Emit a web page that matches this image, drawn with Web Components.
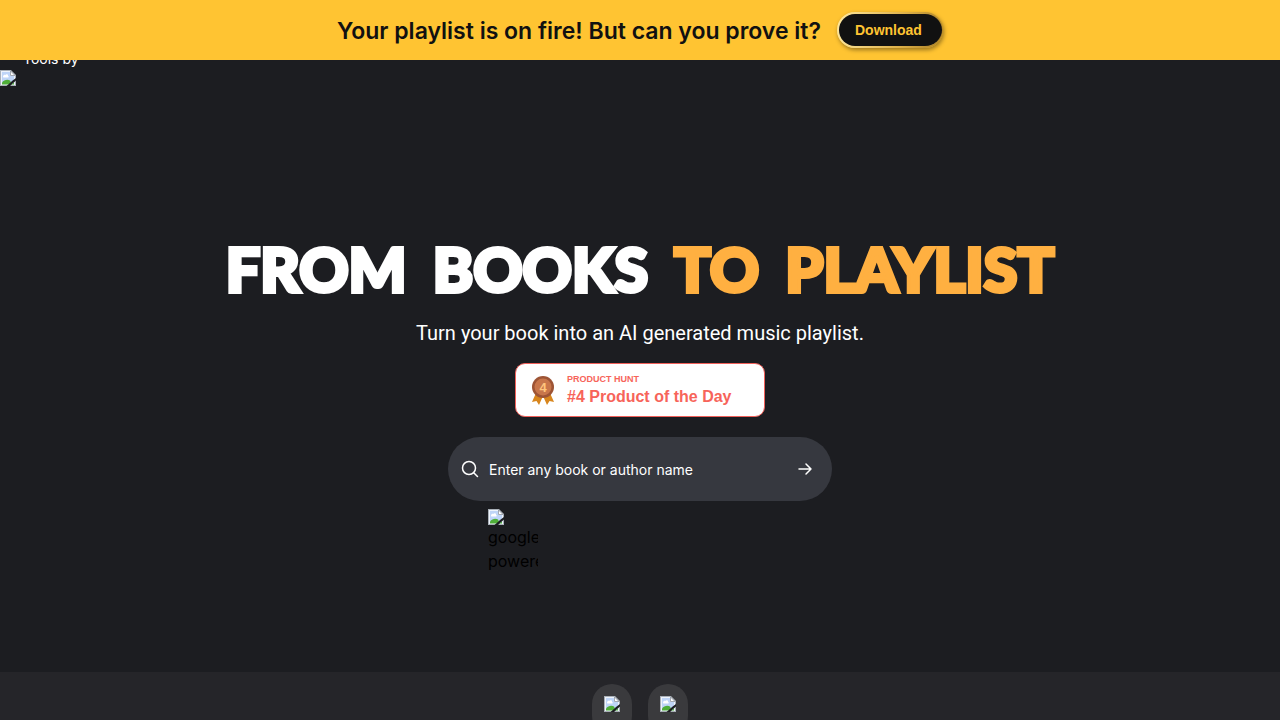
<!DOCTYPE html>
<html lang="en">
<head>
  <meta charset="utf-8">
  <meta name="viewport" content="width=device-width, initial-scale=1">
  <title>From Books to Playlist</title>
  <style>
    body{
      background-color: #1c1d21;
      color: #ffffff;
      font-family: Inter, 'Liberation Sans', sans-serif;
      font-size: 16px;
      line-height: 24px;
      margin: 0;
    }
  </style>
</head>
<body>
  <page-component>
    <promo-banner slot="banner" href="#download" action="Download">Your playlist is on fire! But can you prove it?</promo-banner>
    <tools-header slot="header">Tools by</tools-header>
    <hero-component>
      <title-component slot="title"></title-component>
      <span slot="subtitle">Turn your book into an AI generated music playlist.</span>
      <product-badge slot="badge" rank="4"></product-badge>
      <search-component slot="search"></search-component>
      <powered-component slot="powered">google powered</powered-component>
    </hero-component>
    <footer-component slot="footer"></footer-component>
  </page-component>

  <script>
    class Page extends HTMLElement {
      constructor () {
        super()
        this.shadow = this.attachShadow({ mode: 'open' })
      }

      connectedCallback () {
        this.render()
      }

      render () {
        this.shadow.innerHTML =
        /* html */`
          <style>
            :host{
              display: block;
            }

            .screen{
              display: flex;
              flex-direction: column;
              min-height: calc(100vh - 48px);
            }

            main{
              display: flex;
              flex: 1;
              flex-direction: column;
            }
          </style>

          <slot name="banner"></slot>
          <div class="screen">
            <slot name="header"></slot>
            <main><slot></slot></main>
          </div>
          <slot name="footer"></slot>
        `
      }
    }

    customElements.define('page-component', Page)

    class PromoBanner extends HTMLElement {
      constructor () {
        super()
        this.shadow = this.attachShadow({ mode: 'open' })
      }

      connectedCallback () {
        this.render()
      }

      render () {
        this.shadow.innerHTML =
        /* html */`
          <style>
            :host{
              align-items: center;
              background-color: #ffc432;
              box-sizing: border-box;
              color: #111111;
              display: flex;
              gap: 16px;
              height: 60px;
              justify-content: center;
              left: 0;
              position: fixed;
              right: 0;
              top: 0;
              z-index: 10;
            }

            p{
              font-size: 23px;
              font-weight: 600;
              line-height: 32px;
              margin: 0;
              padding-top: 2px;
            }

            a{
              background: linear-gradient(#111111, #111111) padding-box, linear-gradient(100deg, #ffe9a0, #e0b24a 60%, #a87f25) border-box;
              border: 2px solid transparent;
              border-radius: 20px;
              border-right-width: 1px;
              box-shadow: 1px 2px 4px rgba(0, 0, 0, 0.4);
              color: #ffc432;
              font-family: 'Liberation Sans', sans-serif;
              font-size: 14px;
              font-weight: 700;
              line-height: 20px;
              padding: 6px 20px 6px 16px;
              text-decoration: none;
            }
          </style>

          <p><slot></slot></p>
          <a href="${this.getAttribute('href')}">${this.getAttribute('action')}</a>
        `
      }
    }

    customElements.define('promo-banner', PromoBanner)

    class MissingImage extends HTMLElement {
      constructor () {
        super()
        this.shadow = this.attachShadow({ mode: 'open' })
      }

      connectedCallback () {
        this.render()
      }

      render () {
        this.shadow.innerHTML =
        /* html */`
          <style>
            :host{
              display: block;
              height: 16px;
              width: 16px;
            }

            svg{
              display: block;
            }
          </style>

          <svg width="16" height="16" viewBox="0 0 16 16" aria-hidden="true">
            <path d="M0 0H11L16 5V16H0Z" fill="#a9b0b8"/>
            <path d="M1 1H10.5L15 5.500V15H1Z" fill="#eef3fb"/>
            <path d="M2 2H10V6H14V14H2Z" fill="#bfd5f7"/>
            <path d="M3 6.500C3 5 5 4.500 5.500 5C6 3.500 8.500 4 8 6C9 6 9 7.500 8 7.500H4C3 7.500 3 7 3 6.500Z" fill="#ffffff"/>
            <path d="M2 14.500V12.500C4 9.500 8 9 10 10.500L12 14.500Z" fill="#4fae38"/>
            <path d="M10.500 1V5.500H15Z" fill="#ffffff" stroke="#8f969e" stroke-width="0.800"/>
            <path d="M16 8V10.500L10 16H6.500L10.500 12.500L12 11Z" fill="#1c1d21"/>
            <path d="M14 12.500V14.500H11.500Z" fill="#4fae38"/>
          </svg>
        `
      }
    }

    customElements.define('missing-image', MissingImage)

    class ToolsHeader extends HTMLElement {
      constructor () {
        super()
        this.shadow = this.attachShadow({ mode: 'open' })
      }

      connectedCallback () {
        this.render()
      }

      render () {
        this.shadow.innerHTML =
        /* html */`
          <style>
            :host{
              display: block;
              padding-top: 48px;
            }

            p{
              font-size: 14px;
              line-height: 22px;
              margin: 0;
              padding-left: 23px;
            }
          </style>

          <header>
            <p><slot></slot></p>
            <missing-image></missing-image>
          </header>
        `
      }
    }

    customElements.define('tools-header', ToolsHeader)

    class Hero extends HTMLElement {
      constructor () {
        super()
        this.shadow = this.attachShadow({ mode: 'open' })
      }

      connectedCallback () {
        this.render()
      }

      render () {
        this.shadow.innerHTML =
        /* html */`
          <style>
            :host{
              align-items: center;
              display: flex;
              flex: 1;
              flex-direction: column;
              justify-content: center;
              padding: 42px 16px 0;
            }

            p{
              font-family: Roboto, sans-serif;
              font-size: 20px;
              line-height: 28px;
              margin: 8px 0 16px;
              text-align: center;
            }

            .search{
              box-sizing: border-box;
              margin-top: 20px;
              max-width: 384px;
              width: 100%;
            }
          </style>

          <slot name="title"></slot>
          <p><slot name="subtitle"></slot></p>
          <slot name="badge"></slot>
          <div class="search">
            <slot name="search"></slot>
            <slot name="powered"></slot>
          </div>
        `
      }
    }

    customElements.define('hero-component', Hero)

    class Title extends HTMLElement {
      constructor () {
        super()
        this.shadow = this.attachShadow({ mode: 'open' })
      }

      connectedCallback () {
        this.render()
      }

      render () {
        this.shadow.innerHTML =
        /* html */`
          <style>
            :host{
              display: block;
            }

            h1{
              -webkit-text-stroke: 4px currentColor;
              column-gap: 26px;
              display: flex;
              flex-wrap: wrap;
              font-family: Lato, Inter, sans-serif;
              font-size: 61px;
              font-weight: 900;
              justify-content: center;
              line-height: 84px;
              margin: 0;
            }

            .highlight{
              color: #ffb041;
            }
          </style>

          <h1>
            <span>FROM</span>
            <span>BOOKS</span>
            <span class="highlight">TO</span>
            <span class="highlight">PLAYLIST</span>
          </h1>
        `
      }
    }

    customElements.define('title-component', Title)

    class ProductBadge extends HTMLElement {
      constructor () {
        super()
        this.shadow = this.attachShadow({ mode: 'open' })
      }

      connectedCallback () {
        this.render()
      }

      render () {
        const rank = this.getAttribute('rank')

        this.shadow.innerHTML =
        /* html */`
          <style>
            :host{
              display: block;
            }

            a{
              align-items: center;
              background-color: #ffffff;
              border: 1px solid #f0605a;
              border-radius: 10px;
              box-sizing: border-box;
              color: #f7645a;
              display: flex;
              font-family: 'Liberation Sans', sans-serif;
              font-weight: 700;
              gap: 13px;
              height: 54px;
              padding: 2px 16px 0;
              text-decoration: none;
              width: 250px;
            }

            small{
              display: block;
              font-size: 9px;
              line-height: 12px;
            }

            strong{
              display: block;
              font-size: 16px;
              line-height: 24px;
            }
          </style>

          <a href="#product-hunt">
            <svg width="22" height="30" viewBox="0 0 22 30" aria-hidden="true">
              <path d="M4 17L0 26L4.500 25L7 29L11 20L15 29L17.500 25L22 26L18 17Z" fill="#d8861d"/>
              <circle cx="11" cy="11" r="11" fill="#9d5435"/>
              <circle cx="11" cy="11" r="8.500" fill="#c8764b"/>
              <text x="11" y="16" fill="#ffc57d" font-size="13" font-weight="700" text-anchor="middle">${rank}</text>
            </svg>
            <span>
              <small>PRODUCT HUNT</small>
              <strong>#${rank} Product of the Day</strong>
            </span>
          </a>
        `
      }
    }

    customElements.define('product-badge', ProductBadge)

    class Search extends HTMLElement {
      constructor () {
        super()
        this.shadow = this.attachShadow({ mode: 'open' })
      }

      connectedCallback () {
        this.render()
      }

      render () {
        this.shadow.innerHTML =
        /* html */`
          <style>
            :host{
              display: block;
            }

            form{
              align-items: center;
              background-color: #36383f;
              border-radius: 32px;
              box-sizing: border-box;
              display: flex;
              height: 64px;
              padding: 0 16px 0 12px;
            }

            label{
              display: flex;
            }

            svg{
              display: block;
              fill: none;
              stroke: #ffffff;
              stroke-linecap: round;
              stroke-linejoin: round;
              stroke-width: 1.5;
            }

            input{
              background-color: transparent;
              border: none;
              color: #ffffff;
              flex: 1;
              font-family: inherit;
              font-size: 14px;
              line-height: 20px;
              min-width: 0;
              outline: none;
              padding: 2px 8px 0 9px;
            }

            input::placeholder{
              color: #ffffff;
              opacity: 1;
            }

            button{
              background-color: transparent;
              border: none;
              cursor: pointer;
              padding: 0;
            }
          </style>

          <form>
            <label for="book" aria-label="Book or author">
              <svg width="20" height="20" viewBox="0 0 20 20" aria-hidden="true">
                <circle cx="9" cy="9" r="6.500"/>
                <path d="M14 14L17.500 17.500"/>
              </svg>
            </label>
            <input id="book" type="text" placeholder="Enter any book or author name">
            <button type="submit" aria-label="Search">
              <svg width="22" height="22" viewBox="0 0 22 22" aria-hidden="true">
                <path d="M5 11H17M12 6L17 11L12 16"/>
              </svg>
            </button>
          </form>
        `

        this.shadow.querySelector('form').addEventListener('submit', event => {
          event.preventDefault()
        })
      }
    }

    customElements.define('search-component', Search)

    class Powered extends HTMLElement {
      constructor () {
        super()
        this.shadow = this.attachShadow({ mode: 'open' })
      }

      connectedCallback () {
        this.render()
      }

      render () {
        this.shadow.innerHTML =
        /* html */`
          <style>
            :host{
              color: #000000;
              display: block;
              margin: 8px 0 0 40px;
              overflow: hidden;
              width: 50px;
            }
          </style>

          <missing-image></missing-image>
          <slot></slot>
        `
      }
    }

    customElements.define('powered-component', Powered)

    class Footer extends HTMLElement {
      constructor () {
        super()
        this.shadow = this.attachShadow({ mode: 'open' })
      }

      connectedCallback () {
        this.render()
      }

      render () {
        this.shadow.innerHTML =
        /* html */`
          <style>
            :host{
              background-color: #252529;
              display: block;
            }

            nav{
              display: flex;
              gap: 16px;
              justify-content: center;
              padding: 12px 16px;
            }

            a{
              background-color: #3a3a3d;
              border-radius: 20px;
              padding: 12px 12px 24px;
            }
          </style>

          <nav>
            <a href="#twitter" aria-label="Twitter"><missing-image></missing-image></a>
            <a href="#instagram" aria-label="Instagram"><missing-image></missing-image></a>
          </nav>
        `
      }
    }

    customElements.define('footer-component', Footer)
  </script>
</body>
</html>
